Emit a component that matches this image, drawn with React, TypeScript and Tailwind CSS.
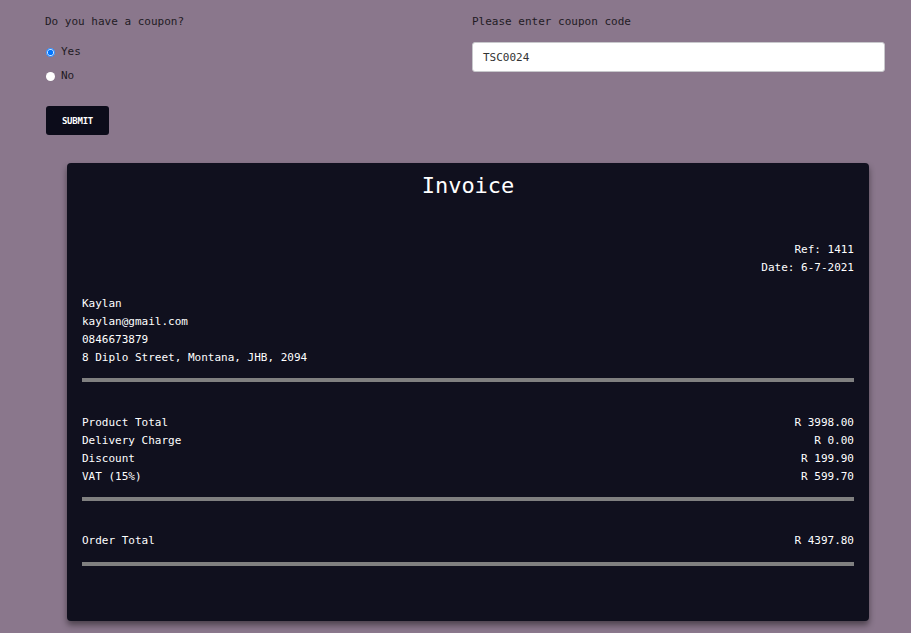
import React from "react";

const mono = { fontFamily: '"DejaVu Sans Mono", "Liberation Mono", monospace' };

function Row({ label, value }: { label: string; value: string }) {
  return (
    <div className="flex justify-between h-[18px] leading-[18px]">
      <span>{label}</span>
      <span>{value}</span>
    </div>
  );
}

export default function App() {
  return (
    <div
      className="min-h-screen w-full bg-[#8a778c] text-[11px] leading-[18px] text-[#1f1b24]"
      style={mono}
    >
      <div className="flex pt-[13px]">
        <div className="w-[472px] shrink-0 pl-[45px]">
          <div className="h-[18px]">Do you have a coupon?</div>
          <div className="flex flex-col gap-[6px] mt-[12px]">
            <label className="flex items-center h-[18px] gap-[6px]">
              <input type="radio" name="c" defaultChecked className="m-0 ml-px w-[9px] h-[9px]" />
              <span>Yes</span>
            </label>
            <label className="flex items-center h-[18px] gap-[6px]">
              <input type="radio" name="c" className="m-0 ml-px w-[9px] h-[9px] appearance-none rounded-full bg-white" />
              <span>No</span>
            </label>
          </div>
          <button className="mt-[21px] ml-px w-[63px] h-[29px] rounded-[3px] bg-[#0c0c1a] text-white text-[9px] font-bold tracking-tight">
            SUBMIT
          </button>
        </div>
        <div className="w-[413px]">
          <div className="h-[18px]">Please enter coupon code</div>
          <div className="mt-[11px] h-[30px] bg-white rounded-[3px] border border-[#c8c8cc] flex items-center pl-[10px] pt-px text-[#333]">
            TSC0024
          </div>
        </div>
      </div>

      <div className="ml-[67px] mt-[28px] w-[802px] rounded-[4px] bg-[#10101e] text-white px-[15px] pt-[8px] pb-[55px] shadow-[0_4px_6px_rgba(0,0,0,0.45)]">
        <div className="text-center text-[22px] leading-[30px]">Invoice</div>
        <div className="mt-[40px] text-right">
          <div>Ref: 1411</div>
          <div>Date: 6-7-2021</div>
        </div>
        <div className="mt-[18px]">
          <div>Kaylan</div>
          <div>kaylan@gmail.com</div>
          <div>0846673879</div>
          <div>8 Diplo Street, Montana, JHB, 2094</div>
        </div>
        <div className="mt-[11px] h-[4px] bg-[#808080]" />
        <div className="mt-[32px]">
          <Row label="Product Total" value="R 3998.00" />
          <Row label="Delivery Charge" value="R 0.00" />
          <Row label="Discount" value="R 199.90" />
          <Row label="VAT (15%)" value="R 599.70" />
        </div>
        <div className="mt-[11px] h-[4px] bg-[#808080]" />
        <div className="mt-[31px]">
          <Row label="Order Total" value="R 4397.80" />
        </div>
        <div className="mt-[12px] h-[4px] bg-[#808080]" />
      </div>
      <div className="h-[20px]" />
    </div>
  );
}
